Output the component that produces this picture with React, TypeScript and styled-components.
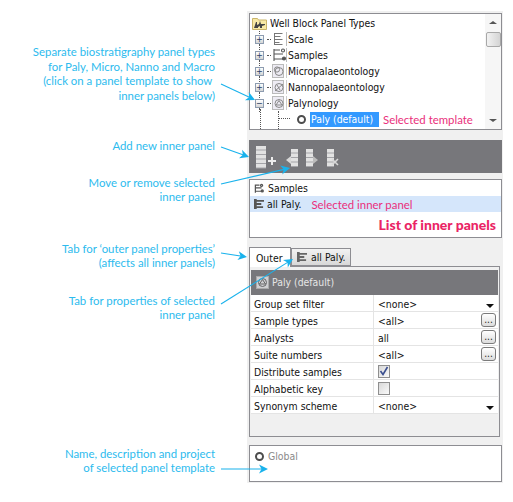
import React from 'react';
import styled, { createGlobalStyle } from 'styled-components';

const Global = createGlobalStyle`
  html, body { margin: 0; padding: 0; background: #fff; }
`;

const UI_FONT = `"DejaVu Sans Condensed", "DejaVu Sans", "Noto Sans", sans-serif`;
const NOTE_FONT = `Lato, "Open Sans", sans-serif`;

const Page = styled.div`
  position: relative;
  width: 513px;
  height: 502px;
  display: flex;
  overflow: hidden;
  background: #fff;
`;

const Notes = styled.div`
  width: 215px;
  margin-right: 32px;
  display: flex;
  flex-direction: column;
`;

const Note = styled.div<{ $top: number }>`
  margin-top: ${p => p.$top}px;
  font-family: ${NOTE_FONT};
  font-size: 11.4px;
  line-height: 14.5px;
  text-align: right;
  white-space: pre;
  color: #2dbbee;
`;

const Window = styled.div`
  margin-top: 11px;
  width: 256px;
  height: 472px;
  box-sizing: border-box;
  padding: 2px 1px 0 2px;
  background: #f0f0f0;
  display: flex;
  flex-direction: column;
  font-family: ${UI_FONT};
  font-size: 10.4px;
  color: #111;
`;

const Box = styled.div<{ $h: number; $mt?: number }>`
  position: relative;
  height: ${p => p.$h}px;
  margin-top: ${p => p.$mt ?? 0}px;
  box-sizing: border-box;
  border: 1px solid #8d8d92;
  background: #fff;
  flex: none;
`;

const TreeBody = styled.div`
  padding: 1px 0 0 2px;
`;

const Row = styled.div<{ $h?: number }>`
  position: relative;
  height: ${p => p.$h ?? 16}px;
  display: flex;
  align-items: center;
  white-space: nowrap;
`;

const Expander = styled.span`
  position: relative;
  width: 9px;
  height: 9px;
  margin: 0 3px 0 3px;
  box-sizing: border-box;
  border: 1px solid #8d9cb0;
  background: linear-gradient(#fff, #d5d5d5);
  flex: none;
  display: flex;
  align-items: center;
  justify-content: center;
  color: #2c3f66;
  font-size: 9px;
  line-height: 7px;
  &::before {
    content: '';
    position: absolute;
    left: 3px;
    top: -5px;
    height: 3px;
    border-left: 1px dotted #555;
  }
  &::after {
    content: '';
    position: absolute;
    left: 3px;
    top: 8px;
    height: 4px;
    border-left: 1px dotted #555;
  }
`;

const Glyph = styled.svg<{ $ml?: number; $mr?: number }>`
  flex: none;
  margin-left: ${p => p.$ml ?? 0}px;
  margin-right: ${p => p.$mr ?? 0}px;
`;

const DottedH = styled.span`
  width: 4px;
  border-top: 1px dotted #555;
  flex: none;
`;

const Spine = styled.span`
  position: absolute;
  left: 8px;
  top: -2px;
  height: 20px;
  border-left: 1px dotted #555;
`;

const Branch = styled.span`
  position: absolute;
  left: 26px;
  top: 0;
  height: 18px;
  width: 10px;
  border-left: 1px dotted #555;
  &::after {
    content: '';
    position: absolute;
    left: 0;
    top: 7px;
    width: 11px;
    border-top: 1px dotted #555;
  }
`;

const Radio = styled.span<{ $ml: number }>`
  width: 9px;
  height: 9px;
  box-sizing: border-box;
  border: 2px solid #4d4d4d;
  border-radius: 50%;
  background: #fff;
  margin-left: ${p => p.$ml}px;
  margin-right: 4px;
  flex: none;
`;

const Picked = styled.span`
  background: #3399ff;
  color: #fff;
  padding: 0 2px 0 1px;
  line-height: 15px;
  min-width: 66px;
`;

const Pink = styled.span<{ $ml: number }>`
  font-family: ${NOTE_FONT};
  font-size: 11.4px;
  color: #ea2f7b;
  margin-left: ${p => p.$ml}px;
`;

const Scrollbar = styled.div`
  position: absolute;
  top: 0;
  right: 0;
  bottom: 0;
  width: 16px;
  background: #f6f6f6;
  display: flex;
  flex-direction: column;
  align-items: center;
`;

const ScrollArrow = styled.div<{ $down?: boolean }>`
  width: 0;
  height: 0;
  margin-top: ${p => (p.$down ? 'auto' : '7px')};
  margin-bottom: ${p => (p.$down ? '7px' : '0')};
  border-left: 4px solid transparent;
  border-right: 4px solid transparent;
  ${p => (p.$down ? 'border-top: 3px solid #555;' : 'border-bottom: 3px solid #555;')}
`;

const Thumb = styled.div`
  width: 15px;
  height: 15px;
  margin-top: 8px;
  box-sizing: border-box;
  border: 1px solid #a8a8a8;
  border-radius: 2px;
  background: linear-gradient(90deg, #f2f2f2, #d4d4d4);
`;

const Toolbar = styled.div`
  height: 33px;
  margin-top: 10px;
  flex: none;
  background: #77777b;
  display: flex;
  align-items: center;
  padding-left: 7px;
`;

const ListRow = styled.div<{ $on?: boolean }>`
  height: 16px;
  padding-left: 4px;
  display: flex;
  align-items: center;
  white-space: nowrap;
  background: ${p => (p.$on ? '#d5e6fb' : 'transparent')};
`;

const ListTitle = styled.div`
  margin: 4px 5px 0 0;
  text-align: right;
  font-family: ${NOTE_FONT};
  font-weight: 900;
  font-size: 14px;
  line-height: 17px;
  color: #ea2465;
`;

const Tabs = styled.div`
  margin-top: 9px;
  height: 19px;
  display: flex;
  align-items: flex-end;
  flex: none;
`;

const Tab = styled.div<{ $on?: boolean }>`
  position: relative;
  box-sizing: border-box;
  width: ${p => (p.$on ? 42 : 60)}px;
  height: ${p => (p.$on ? 20 : 18)}px;
  margin-bottom: ${p => (p.$on ? -1 : 0)}px;
  padding-left: ${p => (p.$on ? 6 : 5)}px;
  border: 1px solid #8d8d92;
  border-bottom: ${p => (p.$on ? 'none' : '1px solid #8d8d92')};
  background: ${p => (p.$on ? '#fff' : 'linear-gradient(#f2f2f2, #d8d8d8)')};
  display: flex;
  align-items: center;
  white-space: nowrap;
  z-index: ${p => (p.$on ? 1 : 0)};
`;

const Panel = styled.div`
  height: 171px;
  width: 251px;
  box-sizing: border-box;
  border: 1px solid #8d8d92;
  padding: 3px 1px 0 1px;
  background: #f0f0f0;
  flex: none;
`;

const PanelHeader = styled.div`
  height: 25px;
  padding-bottom: 1px;
  box-sizing: border-box;
  background: #77777b;
  color: #e6e6e6;
  display: flex;
  align-items: center;
  padding-left: 5px;
`;

const PropRow = styled.div`
  height: 17px;
  box-sizing: border-box;
  display: grid;
  grid-template-columns: 123px 1fr;
  background: #fff;
  border-bottom: 1px solid #e4e4e4;
`;

const PropName = styled.div`
  padding: 1px 0 0 3px;
  display: flex;
  align-items: center;
  border-right: 1px solid #e4e4e4;
  white-space: nowrap;
`;

const PropValue = styled.div`
  position: relative;
  padding-left: 4px;
  display: flex;
  align-items: center;
  white-space: nowrap;
`;

const ValueText = styled.span`
  padding-top: 1px;
`;

const DotsButton = styled.span`
  margin-left: auto;
  margin-right: 2px;
  width: 15px;
  height: 14px;
  box-sizing: border-box;
  border: 1px solid #7b7b7b;
  border-radius: 3px;
  background: linear-gradient(#fff, #dcdcdc);
  font-size: 10px;
  line-height: 11px;
  text-align: center;
  color: #222;
`;

const Caret = styled.span`
  margin-left: auto;
  margin-right: 4px;
  margin-top: 6px;
  width: 0;
  height: 0;
  border-left: 4px solid transparent;
  border-right: 4px solid transparent;
  border-top: 4px solid #111;
`;

const Check = styled.span`
  width: 12px;
  height: 13px;
  box-sizing: border-box;
  border: 1px solid #8f8f8f;
  background: linear-gradient(135deg, #d8d8d8, #fafafa);
  display: flex;
  align-items: center;
  justify-content: center;
`;

const GlobalRow = styled.div`
  display: flex;
  align-items: center;
  height: 16px;
  margin-top: 2px;
  padding-left: 5px;
  color: #8a8a8a;
`;

const Arrows = styled.svg`
  position: absolute;
  left: 0;
  top: 0;
  pointer-events: none;
  z-index: 5;
`;

const Arrow = ({ d }: { d: [number, number, number, number] }) => {
  const [x1, y1, x2, y2] = d;
  const a = Math.atan2(y2 - y1, x2 - x1);
  const p = (l: number, w: number) => {
    const x = x2 - l * Math.cos(a) - w * Math.sin(a);
    const y = y2 - l * Math.sin(a) + w * Math.cos(a);
    return `${x.toFixed(1)},${y.toFixed(1)}`;
  };
  return (
    <g>
      <line x1={x1} y1={y1} x2={x2 - 5 * Math.cos(a)} y2={y2 - 5 * Math.sin(a)} stroke="#19b2ec" strokeWidth="1.1" />
      <polygon points={`${x2},${y2} ${p(9, 4.5)} ${p(6.5, 0)} ${p(9, -4.5)}`} fill="#19b2ec" />
    </g>
  );
};

const FolderIcon = () => (
  <Glyph width="15" height="14" viewBox="0 0 15 14" $mr={3}>
    <path d="M0.5 2.5h5l1 1.5h8v9.5h-14z" fill="#f7e9a6" stroke="#c9b46a" />
    <path d="M2 12l2-6h1v3l2-1 1-3 1 3h4v1l-3 1v2h-2v-2l-2 1v1z" fill="#444" />
  </Glyph>
);

const ScaleIcon = () => (
  <Glyph width="16" height="14" viewBox="0 0 16 14" $ml={1}>
    <g stroke="#777" fill="none">
      <path d="M2.5 1v12M2.5 1.5h8M2.5 4.5h6M2.5 7.5h8M2.5 10.5h5M2.5 12.5h8" />
      <path d="M14.5 0v14" stroke="#bbb" />
    </g>
  </Glyph>
);

const SamplesIcon = ({ small }: { small?: boolean }) => (
  <Glyph width={small ? 11 : 16} height={small ? 11 : 14} viewBox="0 0 16 14" $ml={small ? 0 : 1} $mr={small ? 3 : 0}>
    <g stroke="#555" strokeWidth={small ? 1.8 : 1.1} fill="none">
      <path d="M2 1v12M2 2h6M2 6h9M2 11h9" />
      <circle cx="11" cy="2.5" r="1.5" />
      <circle cx="12" cy="10.5" r="1.5" fill="#555" />
    </g>
    {!small && <path d="M14.5 0v14" stroke="#bbb" />}
  </Glyph>
);

const RoundIcon = ({ kind }: { kind: 'micro' | 'nano' | 'paly' }) => (
  <Glyph width="16" height="14" viewBox="0 0 16 14" $ml={1}>
    <rect x="0.5" y="0.5" width="11" height="13" fill="#eeecf4" stroke="#bbb" />
    <circle cx="7" cy="7.5" r="4" fill="none" stroke="#888" />
    {kind === 'micro' && <circle cx="5" cy="5.5" r="2.6" fill="none" stroke="#888" />}
    {kind === 'nano' && <path d="M3 11l8-7M5 5l3 5" stroke="#888" fill="none" />}
    {kind === 'paly' && <path d="M7 4.5l3 4.5H4z" fill="none" stroke="#888" />}
    <path d="M14.5 0v14" stroke="#ccc" />
  </Glyph>
);

const GraphIcon = ({ color = '#555', mr = 4 }: { color?: string; mr?: number }) => (
  <Glyph width="10" height="10" viewBox="0 0 11 11" $mr={mr}>
    <path d="M0 0h3v11H0zM3 1h8v2H3zM3 4.5h5v2H3zM3 8h7v2H3z" fill={color} />
  </Glyph>
);

const ToolColumn = ({ x, y, w, n }: { x: number; y: number; w: number; n: number }) => (
  <g>
    <rect x={x} y={y} width={w} height={n * 4.5} fill="#a4a4a8" />
    {Array.from({ length: n }).map((_, i) => (
      <rect key={i} x={x} y={y + i * 4.5} width={w} height={3.5} fill="#e2e2e2" />
    ))}
  </g>
);

const ToolIcons = () => (
  <Glyph width="90" height="24" viewBox="0 0 90 24">
    <ToolColumn x={0} y={1} w={10} n={5} />
    <path d="M12 15h3v-3h2v3h3v2h-3v3h-2v-3h-3z" fill="#ececec" />
    <ToolColumn x={35} y={4} w={7} n={4} />
    <path d="M35 11v8l-5-4z" fill="#d8d8d8" />
    <ToolColumn x={50} y={4} w={7} n={4} />
    <path d="M57 11v8l5-4z" fill="#bcbcbc" />
    <ToolColumn x={71} y={4} w={7} n={4} />
    <path d="M76 14l6 6M82 14l-6 6" stroke="#d8d8d8" strokeWidth="1.6" />
  </Glyph>
);

const treeItems: { label: string; icon: React.ReactNode; open?: boolean }[] = [
  { label: 'Scale', icon: <ScaleIcon /> },
  { label: 'Samples', icon: <SamplesIcon /> },
  { label: 'Micropalaeontology', icon: <RoundIcon kind="micro" /> },
  { label: 'Nannopalaeontology', icon: <RoundIcon kind="nano" /> },
  { label: 'Palynology', icon: <RoundIcon kind="paly" />, open: true },
];

const props: { name: string; value?: string; kind?: 'drop' | 'dots' | 'on' | 'off' }[] = [
  { name: 'Group set filter', value: '<none>', kind: 'drop' },
  { name: 'Sample types', value: '<all>', kind: 'dots' },
  { name: 'Analysts', value: 'all', kind: 'dots' },
  { name: 'Suite numbers', value: '<all>', kind: 'dots' },
  { name: 'Distribute samples', kind: 'on' },
  { name: 'Alphabetic key', kind: 'off' },
  { name: 'Synonym scheme', value: '<none>', kind: 'drop' },
];

export default function App() {
  return (
    <Page>
      <Global />
      <Notes>
        <Note $top={45}>{'Separate biostratigraphy panel types\nfor Paly, Micro, Nanno and Macro\n(click on a panel template to show\u00a0\ninner panels below)'}</Note>
        <Note $top={36}>Add new inner panel</Note>
        <Note $top={22}>{'Move or remove selected\ninner panel'}</Note>
        <Note $top={37}>{'Tab for \u2018outer panel properties\u2019\n(affects all inner panels)'}</Note>
        <Note $top={23}>{'Tab for properties of selected\ninner panel'}</Note>
        <Note $top={124}>{'Name, description and project\nof selected panel template'}</Note>
      </Notes>
      <Window>
        <Box $h={117}>
          <TreeBody>
            <Row><FolderIcon />Well Block Panel Types</Row>
            {treeItems.map(item => (
              <Row key={item.label}>
                <Expander>{item.open ? '\u2212' : '+'}</Expander>
                <DottedH />
                {item.icon}
                <span>{item.label}</span>
              </Row>
            ))}
            <Row>
              <Spine />
              <Branch />
              <Radio $ml={45} />
              <Picked>Paly (default)</Picked>
              <Pink $ml={4}>Selected template</Pink>
            </Row>
          </TreeBody>
          <Scrollbar>
            <ScrollArrow />
            <Thumb />
            <ScrollArrow $down />
          </Scrollbar>
        </Box>
        <Toolbar><ToolIcons /></Toolbar>
        <Box $h={59} $mt={6}>
          <ListRow><SamplesIcon small />Samples</ListRow>
          <ListRow $on>
            <GraphIcon mr={3} />all Paly.
            <Pink $ml={10}>Selected inner panel</Pink>
          </ListRow>
          <ListTitle>List of inner panels</ListTitle>
        </Box>
        <Tabs>
          <Tab $on>Outer</Tab>
          <Tab><GraphIcon color="#666" />all Paly.</Tab>
        </Tabs>
        <Panel>
          <PanelHeader>
            <Glyph width="13" height="13" viewBox="0 0 13 13" $mr={3}>
              <rect x="0.5" y="0.5" width="12" height="12" fill="#cfcfd2" stroke="#aaa" />
              <circle cx="6.5" cy="6.5" r="4" fill="none" stroke="#666" />
              <path d="M6.5 3.5l3 4.5h-6z" fill="none" stroke="#666" />
            </Glyph>
            Paly (default)
          </PanelHeader>
          {props.map(row => (
            <PropRow key={row.name}>
              <PropName>{row.name}</PropName>
              <PropValue>
                {row.value && <ValueText>{row.value}</ValueText>}
                {row.kind === 'drop' && <Caret />}
                {row.kind === 'dots' && <DotsButton>...</DotsButton>}
                {(row.kind === 'on' || row.kind === 'off') && (
                  <Check>
                    {row.kind === 'on' && (
                      <svg width="10" height="10" viewBox="0 0 10 10">
                        <path d="M1.5 5l2.5 3.5L8.5 1" fill="none" stroke="#3b4f8f" strokeWidth="1.6" />
                      </svg>
                    )}
                  </Check>
                )}
              </PropValue>
            </PropRow>
          ))}
        </Panel>
        <Box $h={37} $mt={8}>
          <GlobalRow><Radio $ml={0} />Global</GlobalRow>
        </Box>
      </Window>
      <Arrows width="513" height="502" viewBox="0 0 513 502">
        <Arrow d={[221, 84, 255, 100]} />
        <Arrow d={[221, 147, 249, 157]} />
        <Arrow d={[221, 184, 290, 168]} />
        <Arrow d={[221, 253, 247, 257]} />
        <Arrow d={[221, 304, 293, 259]} />
        <Arrow d={[221, 469, 268, 469]} />
      </Arrows>
    </Page>
  );
}
